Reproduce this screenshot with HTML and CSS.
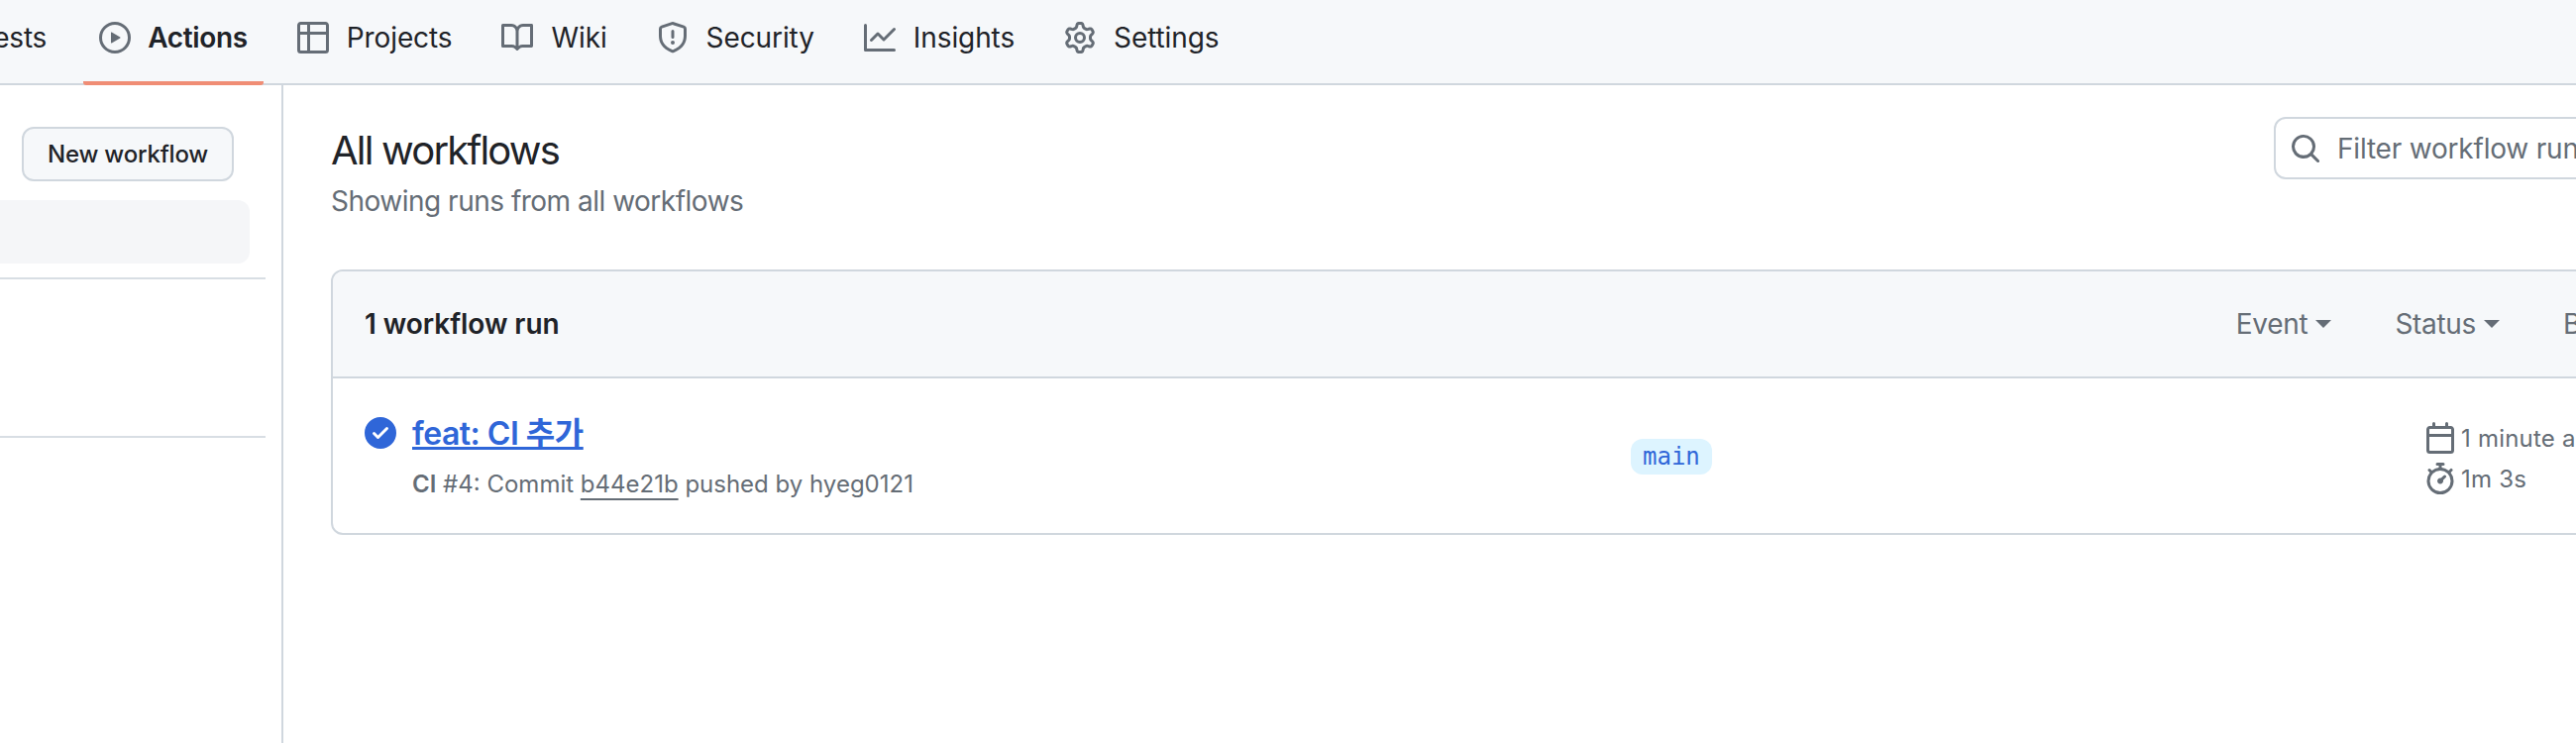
FILE: index.html
```html
<!DOCTYPE html>
<html>
<head>
    <title>Actions</title>
    <link rel="stylesheet" href="styles.css">
</head>
<body>
    <nav class="tabs">
        <a class="tab tab-first">
            <svg class="tab-icon" viewBox="0 0 16 16"><path d="M1.5 3.25a2.25 2.25 0 1 1 3 2.122v5.256a2.251 2.251 0 1 1-1.5 0V5.372A2.25 2.25 0 0 1 1.5 3.25Zm5.677-.177L9.573.677A.25.25 0 0 1 10 .854V2.5h1A2.5 2.5 0 0 1 13.5 5v5.628a2.251 2.251 0 1 1-1.5 0V5a1 1 0 0 0-1-1h-1v1.646a.25.25 0 0 1-.427.177L7.177 3.427a.25.25 0 0 1 0-.354Z"/></svg>
            <span>Pull requests</span>
        </a>
        <a class="tab tab-active">
            <svg class="tab-icon" viewBox="0 0 16 16"><path d="M8 0a8 8 0 1 1 0 16A8 8 0 0 1 8 0ZM1.5 8a6.5 6.5 0 1 0 13 0 6.5 6.5 0 0 0-13 0Zm4.879-2.773 4.264 2.559a.25.25 0 0 1 0 .428l-4.264 2.559A.25.25 0 0 1 6 10.559V5.442a.25.25 0 0 1 .379-.215Z"/></svg>
            <span>Actions</span>
        </a>
        <a class="tab">
            <svg class="tab-icon" viewBox="0 0 16 16"><path d="M0 1.75C0 .784.784 0 1.75 0h12.5C15.216 0 16 .784 16 1.75v12.5A1.75 1.75 0 0 1 14.25 16H1.75A1.75 1.75 0 0 1 0 14.25ZM6.5 6.5v8h7.75a.25.25 0 0 0 .25-.25V6.5Zm8-1.5V1.75a.25.25 0 0 0-.25-.25H6.5V5Zm-13 1.5v7.75c0 .138.112.25.25.25H5v-8ZM5 5V1.5H1.75a.25.25 0 0 0-.25.25V5Z"/></svg>
            <span>Projects</span>
        </a>
        <a class="tab">
            <svg class="tab-icon" viewBox="0 0 16 16"><path d="M0 1.75A.75.75 0 0 1 .75 1h4.253c1.227 0 2.317.59 3 1.501A3.743 3.743 0 0 1 11.006 1h4.245a.75.75 0 0 1 .75.75v10.5a.75.75 0 0 1-.75.75h-4.507a2.25 2.25 0 0 0-1.591.659l-.622.621a.75.75 0 0 1-1.06 0l-.622-.621A2.25 2.25 0 0 0 5.258 13H.75a.75.75 0 0 1-.75-.75Zm7.251 10.324.004-5.073-.002-2.253A2.25 2.25 0 0 0 5.003 2.5H1.5v9h3.757a3.75 3.75 0 0 1 1.994.574ZM8.755 4.75l-.004 7.322a3.752 3.752 0 0 1 1.992-.572H14.5v-9h-3.495a2.25 2.25 0 0 0-2.25 2.25Z"/></svg>
            <span>Wiki</span>
        </a>
        <a class="tab">
            <svg class="tab-icon" viewBox="0 0 16 16"><path d="M7.467.133a1.748 1.748 0 0 1 1.066 0l5.25 1.68A1.75 1.75 0 0 1 15 3.48V7c0 1.566-.32 3.182-1.303 4.682-.983 1.498-2.585 2.813-5.032 3.855a1.697 1.697 0 0 1-1.33 0c-2.447-1.042-4.049-2.357-5.032-3.855C1.32 10.182 1 8.566 1 7V3.48a1.75 1.75 0 0 1 1.217-1.667Zm.61 1.429a.25.25 0 0 0-.153 0l-5.25 1.68a.25.25 0 0 0-.174.238V7c0 1.358.275 2.666 1.057 3.86.784 1.194 2.121 2.34 4.366 3.297a.196.196 0 0 0 .154 0c2.245-.956 3.582-2.104 4.366-3.298C13.225 9.666 13.5 8.36 13.5 7V3.48a.25.25 0 0 0-.174-.237l-5.25-1.68ZM8.75 4.75v3a.75.75 0 0 1-1.5 0v-3a.75.75 0 0 1 1.5 0ZM9 10.5a1 1 0 1 1-2 0 1 1 0 0 1 2 0Z"/></svg>
            <span>Security</span>
        </a>
        <a class="tab">
            <svg class="tab-icon" viewBox="0 0 16 16"><path d="M1.5 1.75V13.5h13.75a.75.75 0 0 1 0 1.5H.75a.75.75 0 0 1-.75-.75V1.75a.75.75 0 0 1 1.5 0Zm14.28 2.53-5.25 5.25a.75.75 0 0 1-1.06 0L7 7.06 4.28 9.78a.751.751 0 0 1-1.042-.018.751.751 0 0 1-.018-1.042l3.25-3.25a.75.75 0 0 1 1.06 0L10 7.94l4.72-4.72a.751.751 0 0 1 1.042.018.751.751 0 0 1 .018 1.042Z"/></svg>
            <span>Insights</span>
        </a>
        <a class="tab">
            <svg class="tab-icon" viewBox="0 0 16 16"><path d="M8 0a8.2 8.2 0 0 1 .701.031C9.444.095 9.99.645 10.16 1.29l.288 1.107c.018.066.079.158.212.224.231.114.454.243.668.386.123.082.233.09.299.071l1.103-.303c.644-.176 1.392.021 1.82.63.27.385.506.792.704 1.218.315.675.111 1.422-.364 1.891l-.814.806c-.049.048-.098.147-.088.294.016.257.016.515 0 .772-.01.147.038.246.088.294l.814.806c.475.469.679 1.216.364 1.891a7.977 7.977 0 0 1-.704 1.217c-.428.61-1.176.807-1.82.63l-1.102-.302c-.067-.019-.177-.011-.3.071a5.909 5.909 0 0 1-.668.386c-.133.066-.194.158-.211.224l-.29 1.106c-.168.646-.715 1.196-1.458 1.26a8.006 8.006 0 0 1-1.402 0c-.743-.064-1.289-.614-1.458-1.26l-.289-1.106c-.018-.066-.079-.158-.212-.224a5.738 5.738 0 0 1-.668-.386c-.123-.082-.233-.09-.299-.071l-1.103.303c-.644.176-1.392-.021-1.82-.63a8.12 8.12 0 0 1-.704-1.218c-.315-.675-.111-1.422.363-1.891l.815-.806c.05-.048.098-.147.088-.294a6.214 6.214 0 0 1 0-.772c.01-.147-.038-.246-.088-.294l-.815-.806C.635 6.045.431 5.298.746 4.623a7.92 7.92 0 0 1 .704-1.217c.428-.61 1.176-.807 1.82-.63l1.102.302c.067.019.177.011.3-.071.214-.143.437-.272.668-.386.133-.066.194-.158.211-.224l.29-1.106C6.009.645 6.556.095 7.299.03 7.53.01 7.764 0 8 0Zm-.571 1.525c-.036.003-.108.036-.137.146l-.289 1.105c-.147.561-.549.967-.998 1.189-.173.086-.34.183-.5.29-.417.278-.97.423-1.529.27l-1.103-.303c-.109-.03-.175.016-.195.045-.22.312-.412.644-.573.99-.014.031-.021.11.059.19l.815.806c.411.406.562.957.53 1.456a4.709 4.709 0 0 0 0 .582c.032.499-.119 1.05-.53 1.456l-.815.806c-.081.08-.073.159-.059.19.162.346.353.677.573.989.02.03.085.076.195.046l1.102-.303c.56-.153 1.113-.008 1.53.27.161.107.328.204.501.29.447.222.85.629.997 1.189l.289 1.105c.029.109.101.143.137.146a6.6 6.6 0 0 0 1.142 0c.036-.003.108-.036.137-.146l.289-1.105c.147-.561.549-.967.998-1.189.173-.086.34-.183.5-.29.417-.278.97-.423 1.529-.27l1.103.303c.109.029.175-.016.195-.045.22-.313.411-.644.573-.99.014-.031.021-.11-.059-.19l-.815-.806c-.411-.406-.562-.957-.53-1.456a4.709 4.709 0 0 0 0-.582c-.032-.499.119-1.05.53-1.456l.815-.806c.081-.08.073-.159.059-.19a6.464 6.464 0 0 0-.573-.989c-.02-.03-.085-.076-.195-.046l-1.102.303c-.56.153-1.113.008-1.53-.27a4.44 4.44 0 0 0-.501-.29c-.447-.222-.85-.629-.997-1.189l-.289-1.105c-.029-.11-.101-.143-.137-.146a6.6 6.6 0 0 0-1.142 0ZM11 8a3 3 0 1 1-6 0 3 3 0 0 1 6 0ZM9.5 8a1.5 1.5 0 1 0-3.001.001A1.5 1.5 0 0 0 9.5 8Z"/></svg>
            <span>Settings</span>
        </a>
    </nav>

    <div class="page">
        <aside class="sidebar">
            <button class="new-workflow">New workflow</button>
            <div class="side-selected"></div>
            <div class="side-rule"></div>
            <div class="side-rule side-rule-low"></div>
        </aside>

        <main class="main">
            <div class="main-head">
                <div class="main-title">
                    <h2>All workflows</h2>
                    <p>Showing runs from all workflows</p>
                </div>
                <div class="filter">
                    <svg class="filter-icon" viewBox="0 0 16 16"><path d="M10.68 11.74a6 6 0 0 1-7.922-8.982 6 6 0 0 1 8.982 7.922l3.04 3.04a.749.749 0 0 1-.326 1.275.749.749 0 0 1-.734-.215ZM11.5 7a4.499 4.499 0 1 0-8.997 0A4.499 4.499 0 0 0 11.5 7Z"/></svg>
                    <span>Filter workflow runs</span>
                </div>
            </div>

            <div class="runs">
                <div class="runs-head">
                    <strong>1 workflow run</strong>
                    <div class="run-filters">
                        <span class="run-filter">Event<i class="caret"></i></span>
                        <span class="run-filter">Status<i class="caret"></i></span>
                        <span class="run-filter">Branch<i class="caret"></i></span>
                        <span class="run-filter">Actor<i class="caret"></i></span>
                    </div>
                </div>
                <div class="run">
                    <div class="run-info">
                        <svg class="run-check" viewBox="0 0 16 16"><path d="M8 16A8 8 0 1 1 8 0a8 8 0 0 1 0 16Zm3.78-9.72a.751.751 0 0 0-.018-1.042.751.751 0 0 0-1.042-.018L6.75 9.19 5.28 7.72a.751.751 0 0 0-1.042.018.751.751 0 0 0-.018 1.042l2 2a.75.75 0 0 0 1.06 0Z"/></svg>
                        <div>
                            <a class="run-title">feat: CI 추가</a>
                            <div class="run-sub"><b>CI</b> #4: Commit <a class="run-sha">b44e21b</a> pushed by hyeg0121</div>
                        </div>
                    </div>
                    <div class="run-branch"><span class="branch">main</span></div>
                    <div class="run-meta">
                        <div class="meta-line">
                            <svg class="meta-icon" viewBox="0 0 16 16"><path d="M4.75 0a.75.75 0 0 1 .75.75V2h5V.75a.75.75 0 0 1 1.5 0V2h1.25c.966 0 1.75.784 1.75 1.75v10.5A1.75 1.75 0 0 1 13.25 16H2.75A1.75 1.75 0 0 1 1 14.25V3.75C1 2.784 1.784 2 2.75 2H4V.75A.75.75 0 0 1 4.75 0ZM2.5 7.5v6.75c0 .138.112.25.25.25h10.5a.25.25 0 0 0 .25-.25V7.5Zm10.75-4H2.75a.25.25 0 0 0-.25.25V6h11V3.75a.25.25 0 0 0-.25-.25Z"/></svg>
                            <span>1 minute ago</span>
                        </div>
                        <div class="meta-line">
                            <svg class="meta-icon" viewBox="0 0 16 16"><path d="M5.75.75A.75.75 0 0 1 6.5 0h3a.75.75 0 0 1 0 1.5h-.75v1l-.001.041a6.724 6.724 0 0 1 3.464 1.435l.007-.006.75-.75a.75.75 0 1 1 1.06 1.06l-.75.75-.006.007a6.75 6.75 0 1 1-10.548 0L2.72 5.03l-.75-.75a.751.751 0 0 1 .018-1.042.751.751 0 0 1 1.042-.018l.75.75.007.006A6.72 6.72 0 0 1 7.25 2.541V1.5H6.5a.75.75 0 0 1-.75-.75ZM8 14.5a5.25 5.25 0 1 0-.001-10.501A5.25 5.25 0 0 0 8 14.5Zm.389-6.7 1.33-1.33a.75.75 0 1 1 1.061 1.06L9.45 8.861A1.503 1.503 0 0 1 8 10.75a1.499 1.499 0 1 1 .389-2.95Z"/></svg>
                            <span>1m 3s</span>
                        </div>
                    </div>
                </div>
            </div>
        </main>
    </div>
</body>
</html>
```

FILE: styles.css
```css
html, body {
    margin: 0;
    padding: 0;
    height: 100%;
    overflow: hidden;
    background-color: white;
}

body {
    font-family: Inter, "Noto Sans CJK KR", sans-serif;
    font-size: 28px;
    color: #1f2328;
    display: flex;
    flex-direction: column;
}

/* Top tabs */
.tabs {
    display: flex;
    flex: none;
    gap: 18px;
    height: 84px;
    background-color: #f6f8fa;
    border-bottom: 2px solid #d0d7de;
}

.tab {
    display: flex;
    flex: none;
    align-items: center;
    gap: 18px;
    height: 76px;
    padding: 0 16px 6px;
    border-bottom: 4px solid transparent;
    letter-spacing: -0.1px;
}

.tab-first {
    margin-left: -187px;
    margin-right: 3px;
    letter-spacing: -0.2px;
}

.tab-active {
    gap: 17px;
    font-weight: 600;
    letter-spacing: -0.35px;
    border-bottom-color: #f08d75;
    border-radius: 0 0 3px 3px;
}

.tab-icon {
    width: 32px;
    height: 32px;
    fill: #656d76;
}

/* Page columns */
.page {
    display: flex;
    flex: 1;
}

.sidebar {
    display: flex;
    flex: none;
    flex-direction: column;
    width: 284px;
    padding-top: 42px;
    border-right: 2px solid #d0d7de;
}

.new-workflow {
    align-self: flex-end;
    width: 214px;
    height: 55px;
    margin-right: 48px;
    padding: 0;
    font-family: inherit;
    font-size: 24px;
    font-weight: 500;
    color: #1f2328;
    background-color: #f6f8fa;
    border: 2px solid #d0d7de;
    border-radius: 12px;
    letter-spacing: -0.2px;
}

.side-selected {
    width: 252px;
    height: 64px;
    margin-top: 19px;
    background-color: #f5f6f8;
    border-radius: 0 12px 12px 0;
}

.side-rule {
    width: 268px;
    height: 2px;
    margin-top: 14px;
    background-color: #d8dee4;
}

.side-rule-low {
    margin-top: 158px;
}

.main {
    flex: none;
    width: 2561px;
    padding: 32px 0 0 48px;
}

.main-head {
    display: flex;
    justify-content: space-between;
    align-items: flex-start;
    height: 154px;
}

.main-title {
    padding-top: 4px;
}

.main-title h2 {
    margin: 0;
    font-size: 40px;
    font-weight: 400;
    line-height: 60px;
    letter-spacing: -1.8px;
}

.main-title p {
    margin: 0;
    font-size: 28px;
    line-height: 42px;
    color: #656d76;
    letter-spacing: -0.5px;
}

.filter {
    display: flex;
    align-items: center;
    gap: 16px;
    box-sizing: border-box;
    width: 600px;
    height: 63px;
    padding-left: 14px;
    font-size: 28px;
    color: #656d76;
    border: 2px solid #d0d7de;
    border-radius: 12px;
    letter-spacing: -0.2px;
}

.filter-icon {
    width: 32px;
    height: 32px;
    fill: #656d76;
}

/* Runs table */
.runs {
    border: 2px solid #d0d7de;
    border-radius: 12px;
    overflow: hidden;
}

.runs-head {
    display: flex;
    align-items: center;
    justify-content: space-between;
    height: 106px;
    padding: 0 32px;
    background-color: #f6f8fa;
    border-bottom: 2px solid #d0d7de;
}

.runs-head strong {
    font-weight: 600;
    letter-spacing: -0.05px;
}

.run-filters {
    display: flex;
    gap: 64px;
    color: #656d76;
    font-size: 28px;
    letter-spacing: -0.3px;
}

.run-filter {
    display: flex;
    align-items: center;
    gap: 8px;
}

.caret {
    width: 0;
    height: 0;
    border-top: 8px solid #656d76;
    border-left: 8px solid transparent;
    border-right: 8px solid transparent;
}

.run {
    display: grid;
    grid-template-columns: 1278px 801px 1fr;
    align-items: center;
    height: 156px;
    padding-left: 32px;
}

.run-info {
    display: flex;
    gap: 16px;
    padding-top: 3px;
}

.run-check {
    flex: none;
    width: 32px;
    height: 32px;
    margin-top: 4px;
    fill: #2f66d8;
}

.run-title {
    display: block;
    font-size: 32px;
    font-weight: 600;
    line-height: 42px;
    color: #2f66d8;
    text-decoration: underline;
    text-decoration-thickness: 3px;
    letter-spacing: -0.5px;
}

.run-sub {
    margin-top: 12px;
    font-size: 24px;
    line-height: 36px;
    color: #656d76;
}

.run-sub b {
    font-weight: 600;
}

.run-sha {
    text-decoration: underline;
    text-decoration-thickness: 2px;
    text-underline-offset: 6px;
}

.branch {
    display: inline-block;
    padding: 0 12px;
    font-family: "DejaVu Sans Mono", monospace;
    font-size: 24px;
    line-height: 36px;
    color: #2f66d8;
    background-color: #ddf4ff;
    border-radius: 12px;
}

.run-meta {
    padding-top: 5px;
    font-size: 24px;
    letter-spacing: 0.2px;
    color: #656d76;
}

.meta-line {
    display: flex;
    align-items: center;
    gap: 5px;
    height: 41px;
}

.meta-icon {
    width: 32px;
    height: 32px;
    fill: #656d76;
}
```
